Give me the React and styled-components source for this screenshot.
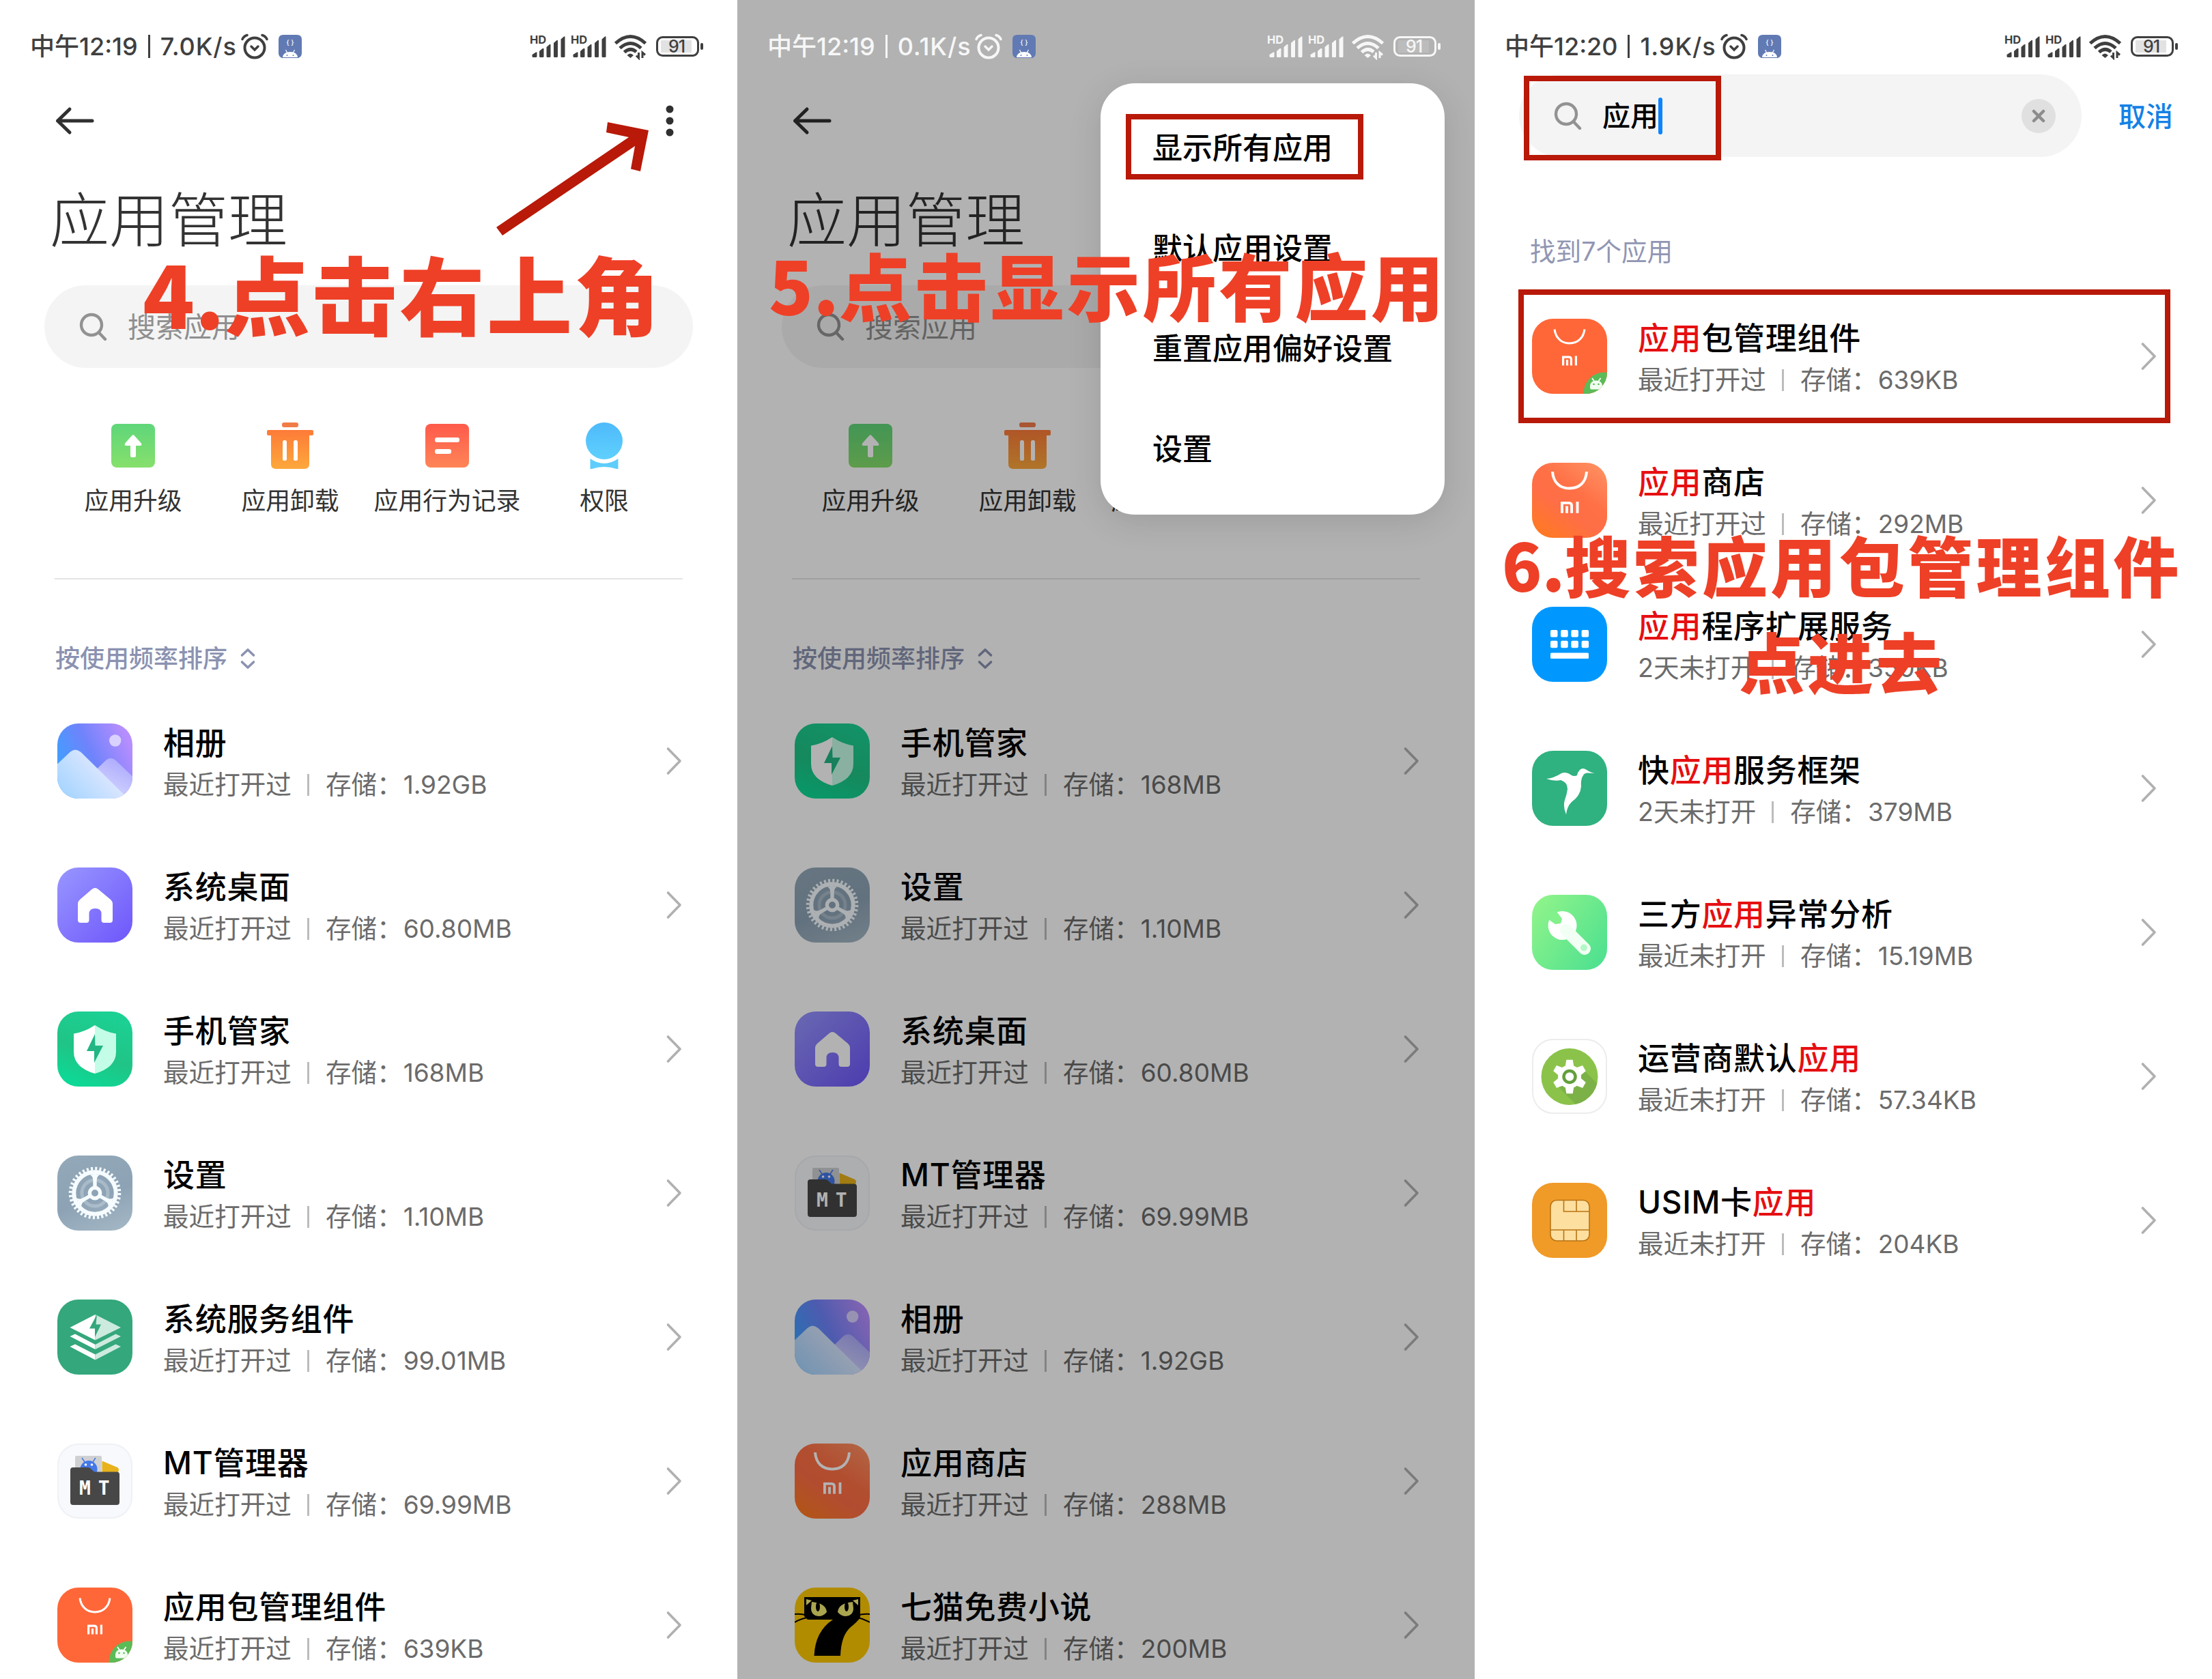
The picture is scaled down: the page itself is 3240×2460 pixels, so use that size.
import React from "react";
import styled, { createGlobalStyle } from "styled-components";

const GlobalStyle = createGlobalStyle`
  * {
    box-sizing: border-box;
  }
  body {
    margin: 0;
    background: #fff;
    font-family: Inter, "Noto Sans CJK SC", sans-serif;
  }
`;

const Page = styled.main`
  display: flex;
  width: 3240px;
  height: 2460px;
  overflow: hidden;
`;

const Panel = styled.section`
  position: relative;
  display: flex;
  flex-direction: column;
  width: 1080px;
  height: 2460px;
  overflow: hidden;
  background: #fff;
  color: #333;
`;

const StatusRow = styled.div`
  position: relative;
  z-index: 2;
  display: flex;
  flex: none;
  align-items: flex-start;
  justify-content: space-between;
  height: 109px;
  padding: 48px 48px 0 44px;
  color: ${(p) => (p.$light ? "#f7f7f7" : "#3f3f3f")};
`;

const StatusLeft = styled.div`
  display: flex;
  align-items: center;
  height: 40px;
  font-size: 36px;
  font-weight: 500;
  line-height: 40px;
  white-space: nowrap;
`;

const Speed = styled.span`
  letter-spacing: 0.9px;
`;

const StatusBarLine = styled.i`
  width: 3px;
  height: 34px;
  margin: 0 15px 0 15px;
  background: currentColor;
`;

const AlarmSvg = styled.svg`
  width: 44px;
  height: 40px;
  margin-left: 4px;
`;

const DevSvg = styled.svg`
  width: 34px;
  height: 34px;
  margin-left: 13px;
`;

const SignalSvg = styled.svg`
  width: 258px;
  height: 40px;
`;

const Header = styled.header`
  display: flex;
  flex: none;
  align-items: center;
  justify-content: space-between;
  height: 136px;
  padding: 0 92px 0 78px;
`;

const Heading = styled.h1`
  flex: none;
  height: 110px;
  margin: 24px 0 39px 73px;
  font-size: 87px;
  font-weight: 300;
  line-height: 110px;
`;

const SearchBox = styled.div`
  display: flex;
  flex: none;
  align-items: center;
  width: ${(p) => p.$width}px;
  height: 121px;
  margin-left: 65px;
  padding: 0 38px 0 51px;
  border-radius: 61px;
  background: #f4f4f4;
  color: ${(p) => (p.$filled ? "#000" : "#8f8f8f")};
  font-size: 41px;
  font-weight: ${(p) => (p.$filled ? 500 : 400)};
  line-height: 60px;
`;

const SearchLabel = styled.span`
  margin-left: 29px;
`;

const Caret = styled.i`
  width: 6px;
  height: 54px;
  border-radius: 3px;
  background: #0d84ff;
`;

const ClearButton = styled.span`
  display: flex;
  align-items: center;
  justify-content: center;
  width: 50px;
  height: 50px;
  margin-left: auto;
  border-radius: 50%;
  background: #e0e0e0;
`;

const SearchBar = styled.div`
  display: flex;
  flex: none;
  align-items: center;
`;

const Cancel = styled.span`
  margin: 2px 0 0 54px;
  color: #1481e6;
  font-size: 40px;
  font-weight: 500;
  line-height: 60px;
`;

const Actions = styled.div`
  display: grid;
  flex: none;
  grid-template-columns: repeat(4, 230px);
  margin: 80px 0 0 80px;
`;

const Action = styled.div`
  display: flex;
  flex-direction: column;
  gap: 27px;
  align-items: center;
  font-size: 35.8px;
  line-height: 40px;
  white-space: nowrap;

  svg {
    width: 68px;
    height: 68px;
  }
`;

const Divider = styled.hr`
  flex: none;
  width: 920px;
  height: 2px;
  margin: 93px 0 0 80px;
  border: 0;
  background: #e4e4e4;
`;

const SortRow = styled.div`
  display: flex;
  flex: none;
  gap: 18px;
  align-items: center;
  margin: 91px 0 0 81px;
  color: #8b92b1;
  font-size: 36px;
  font-weight: 500;
  line-height: 50px;
`;

const Count = styled.div`
  flex: none;
  margin: 114px 0 22px 81px;
  color: #9196b3;
  font-size: 37.6px;
  line-height: 50px;
`;

const List = styled.ul`
  display: flex;
  flex: none;
  flex-direction: column;
  margin: ${(p) => p.$top}px 0 0;
  padding: 0;
  list-style: none;
`;

const Row = styled.li`
  display: flex;
  align-items: center;
  height: 211px;
  padding: 0 80px 0 84px;
`;

const IconTile = styled.svg`
  flex: none;
  width: 110px;
  height: 110px;
  border-radius: 31px;
  background: ${(p) => p.$bg};
  box-shadow: ${(p) => (p.$outline ? `inset 0 0 0 2px ${p.$outline}` : "none")};
  overflow: hidden;
`;

const RowText = styled.div`
  flex: 1;
  margin: 9px 0 0 45px;
`;

const AppName = styled.div`
  margin-bottom: 2px;
  color: #000;
  font-size: 46px;
  font-weight: 500;
  line-height: 60px;
  letter-spacing: 0.7px;
`;

const Match = styled.span`
  color: #e60f12;
`;

const AppInfo = styled.div`
  display: flex;
  align-items: center;
  color: #6b6b6b;
  font-size: 37.6px;
  line-height: 60px;
`;

const InfoLine = styled.i`
  width: 3px;
  height: 32px;
  margin: 0 24px 0 23px;
  background: #bcbcbc;
`;

const Size = styled.span`
  margin-left: 1px;
  font-size: 37px;
`;

const Overlay = styled.div`
  position: absolute;
  inset: 0;
  z-index: 1;
  background: rgba(0, 0, 0, 0.3);
`;

const Menu = styled.div`
  position: absolute;
  z-index: 3;
  top: 122px;
  left: 532px;
  display: flex;
  flex-direction: column;
  width: 504px;
  padding: 22px 0;
  border-radius: 50px;
  background: #fff;
  box-shadow: 0 10px 50px rgba(0, 0, 0, 0.12);
`;

const MenuItem = styled.div`
  height: 147px;
  padding-left: 76px;
  color: #000;
  font-size: 44px;
  font-weight: 500;
  line-height: 147px;
`;

const RedFrame = styled.div`
  position: absolute;
  z-index: 4;
  top: ${(p) => p.$top}px;
  left: ${(p) => p.$left}px;
  width: ${(p) => p.$width}px;
  height: ${(p) => p.$height}px;
  border: 8px solid #b81908;
`;

const ArrowSvg = styled.svg`
  position: absolute;
  z-index: 4;
  top: 170px;
  left: 720px;
  width: 240px;
  height: 185px;
`;

const Caption = styled.div`
  position: absolute;
  z-index: 5;
  top: ${(p) => p.$top}px;
  left: ${(p) => p.$left}px;
  color: #ee4027;
  font-family: "Noto Sans CJK SC", sans-serif;
  font-size: ${(p) => p.$size}px;
  font-weight: 800;
  line-height: 141px;
  letter-spacing: ${(p) => p.$spacing}px;
  text-align: center;
  white-space: nowrap;
`;

const StepNumber = styled.span`
  letter-spacing: 0;
`;

const BagMark = ({ wide }) => (
  <g fill="none" stroke="#fff">
    {wide ? (
      <path d="M30 13C31 29 41 37.500 55 37.500S79 29 80 13" strokeWidth="4" />
    ) : (
      <path d="M33 15.500C34.500 28 43 36 55 36S75.500 28 77 15.500" strokeWidth="3" />
    )}
    <g
      transform={wide ? "translate(42 57) scale(1.2)" : "translate(44 54.500)"}
      strokeWidth="3.200"
    >
      <path d="M1.600 14V1.600H10Q13.400 1.600 13.400 5V14M7.500 5.500V14M20.400 0V14" />
    </g>
  </g>
);

const GalleryIcon = () => (
  <IconTile
    viewBox="0 0 110 110"
    $bg="linear-gradient(65deg, #3f9fff 15%, #6f83fb 50%, #b88eff 90%)"
  >
    <defs>
      <linearGradient id="hillFront" x1="0" y1="1" x2="0.9" y2="0.4">
        <stop offset="0" stopColor="#9ed2ff" />
        <stop offset="1" stopColor="#e6eaff" />
      </linearGradient>
      <linearGradient id="hillBack" x1="0.9" y1="0" x2="0.3" y2="1">
        <stop offset="0" stopColor="#a9a5fd" />
        <stop offset="1" stopColor="#d9deff" />
      </linearGradient>
    </defs>
    <circle cx="84.700" cy="25" r="8.700" fill="#d9d2ff" />
    <path
      d="M40 84L70 55Q78 47.500 86 54.500L110 77.500V110H60Z"
      fill="url(#hillBack)"
    />
    <path
      d="M0 59.500L18.500 42Q26 35 34.500 42L98 104.500V110H0Z"
      fill="url(#hillFront)"
    />
  </IconTile>
);

const HomeIcon = () => (
  <IconTile
    viewBox="0 0 110 110"
    $bg="linear-gradient(135deg, #9490ff 10%, #7059fb 95%)"
  >
    <path
      d="M50.500 32Q55.300 28 60 32L78 47Q81 49.700 81 53V77Q81 81 77 81H68.500Q64.500 81 64.500 77V68Q64.500 60 55.500 60T46.500 68V77Q46.500 81 42.500 81H34Q30 81 30 77V53Q30 49.700 33 47Z"
      fill="#fff"
    />
  </IconTile>
);

const GuardIcon = () => (
  <IconTile
    viewBox="0 0 110 110"
    $bg="linear-gradient(20deg, #08de9a 0%, #20c486 45%, #1bd397 100%)"
  >
    <path d="M55 20Q40 30 24 32.500V59Q24 82 55 91Z" fill="#fff" />
    <path d="M55 20Q70 30 86 32.500V59Q86 82 55 91Z" fill="#c4fde7" />
    <path d="M55 33L43 58H54V75L67 50H55.500Z" fill="#21b684" />
  </IconTile>
);

const SettingsIcon = () => (
  <IconTile
    viewBox="0 0 110 110"
    $bg="linear-gradient(160deg, #93a9b9 0%, #8da3b5 55%, #a5b8c6 100%)"
  >
    <g fill="none" stroke="#f6fcff">
      <circle cx="55" cy="55" r="19" strokeWidth="5" opacity="0.250" />
      <circle
        cx="55"
        cy="55"
        r="35.800"
        strokeWidth="5"
        strokeDasharray="3 3.248"
      />
      <circle cx="55" cy="55" r="30.700" strokeWidth="6" />
      <circle cx="55" cy="55" r="7.700" strokeWidth="5.400" />
      <path
        d="M55 46V26M47.500 59.500L30 69.500M62.500 59.500L80 69.500"
        strokeWidth="5.400"
      />
    </g>
    <g fill="#f6fcff">
      <path d="M46 27.500Q52 29 52.300 36H57.700Q58 29 64 27.500Z" />
      <path
        d="M46 27.500Q52 29 52.300 36H57.700Q58 29 64 27.500Z"
        transform="rotate(120 55 55)"
      />
      <path
        d="M46 27.500Q52 29 52.300 36H57.700Q58 29 64 27.500Z"
        transform="rotate(240 55 55)"
      />
    </g>
  </IconTile>
);

const ServiceIcon = () => (
  <IconTile viewBox="0 0 110 110" $bg="#34a77c">
    <path d="M55.500 22L18.500 41L55.500 59.500Z" fill="#fff" />
    <path d="M55.500 22L93 41L55.500 59.500Z" fill="#cdeadf" />
    <path d="M58 22L47 42.500H55V55L64 36.500H56.500Z" fill="#34a77c" />
    <path d="M18.500 54L26 50.500L55.500 66V73Z" fill="#fff" />
    <path d="M93 54L85.500 50.500L55.500 66V73Z" fill="#cdeadf" />
    <path d="M18.500 69L26 65.500L55.500 80.500V88.500Z" fill="#fff" />
    <path d="M93 69L85.500 65.500L55.500 80.500V88.500Z" fill="#cdeadf" />
  </IconTile>
);

const MtIcon = () => (
  <IconTile viewBox="0 0 110 110" $bg="#f7f9fd" $outline="#eff1f5">
    <rect x="26" y="18" width="39" height="30" rx="2" fill="#cfd0d2" />
    <path d="M36 21L40 27M56 21L52 27" stroke="#4478e8" strokeWidth="1.500" />
    <circle cx="46" cy="37.500" r="12.500" fill="#4478e8" />
    <circle cx="41.500" cy="31" r="1.800" fill="#fff" />
    <circle cx="50.500" cy="31" r="1.800" fill="#fff" />
    <path d="M65.500 25.500L88 35Q90.500 36.500 90 39L88 45H65.500Z" fill="#e8b21c" />
    <path
      d="M19 39Q19 35 23 35H45Q48 35 50 38L54 41.600H87Q91 41.600 91 45.600V86Q91 90 87 90H23Q19 90 19 86Z"
      fill="#474747"
    />
    <text
      x="32"
      y="75"
      fill="#fff"
      fontFamily="DejaVu Sans Mono, monospace"
      fontSize="28"
      fontWeight="700"
      letterSpacing="11"
    >
      MT
    </text>
  </IconTile>
);

const InstallerIcon = () => (
  <IconTile viewBox="0 0 110 110" $bg="#ff6738">
    <BagMark />
    <circle cx="106" cy="109" r="30.500" fill="#5bbb57" />
    <path d="M88 87L91 91.500M100.500 87L97.500 91.500" stroke="#fff" strokeWidth="1.800" />
    <path
      d="M85 98Q86 90.500 94 90.500T103 98V101Q103 103.500 101 103.500H87Q85 103.500 85 101Z"
      fill="#f1fff0"
    />
    <circle cx="90.500" cy="96" r="1.300" fill="#5bbb57" />
    <circle cx="97.500" cy="96" r="1.300" fill="#5bbb57" />
  </IconTile>
);

const StoreIcon = () => (
  <IconTile
    viewBox="0 0 110 110"
    $bg="linear-gradient(35deg, #ff7c1c 0%, #ff6e46 40%, #ff7046 60%, #ff9566 100%)"
  >
    <BagMark wide />
  </IconTile>
);

const CatIcon = () => (
  <IconTile viewBox="0 0 110 110" $bg="#fec900">
    <path
      d="M14 14H96V44Q92 50 82 58Q68 70 67 100H28.500Q30 64 56 47H19L14 42Z"
      fill="#000"
    />
    <path d="M17 17L25 19L17 26ZM93 17L85 19L93 26Z" fill="#f8f07a" />
    <path
      d="M0 39Q10 38 18 41M0 51Q8 46 18 44M110 39Q100 38 92 41M110 51Q102 46 92 44"
      fill="none"
      stroke="#000"
      strokeWidth="2"
    />
    <path d="M25 21Q46 23 47 36Q42 42 35 42Q24 41 24 30Z" fill="#f4ec72" />
    <path d="M85 21Q64 23 63 36Q68 42 75 42Q86 41 86 30Z" fill="#f4ec72" />
    <ellipse cx="34" cy="28" rx="3" ry="7" fill="#000" />
    <ellipse cx="76" cy="28" rx="3" ry="7" fill="#000" />
  </IconTile>
);

const KeyboardIcon = () => (
  <IconTile viewBox="0 0 110 110" $bg="#0098fe">
    {[34, 49.8].map((y) =>
      [27, 42.2, 57.4, 72.6].map((x) => (
        <rect
          key={`${x}-${y}`}
          x={x}
          y={y}
          width="10.500"
          height="10.500"
          rx="2"
          fill="#fff"
        />
      ))
    )}
    <rect x="27" y="67.500" width="56" height="8.500" rx="1.500" fill="#fff" />
  </IconTile>
);

const BirdIcon = () => (
  <IconTile viewBox="0 0 110 110" $bg="#2fb180">
    <path
      d="M91.500 33Q84 31 80 28Q74 24 70 28Q67 31 66 36Q62 38 58 36Q50 30 43 33Q32 40 21 41Q32 45 42 43Q52 46 52 56Q51 64 48 72Q45 82 50 93.500Q51 82 58 75Q71 66 72 52Q71 42 75 36Q77 32 82 32.500Z"
      fill="#fff"
    />
  </IconTile>
);

const WrenchIcon = () => (
  <IconTile
    viewBox="0 0 110 110"
    $bg="linear-gradient(125deg, #90f48a 5%, #4de090 95%)"
  >
    <circle cx="44.500" cy="45" r="21" fill="#fff" />
    <path
      d="M50 52L77 79"
      stroke="#f2fff4"
      strokeWidth="18"
      strokeLinecap="round"
    />
    <path d="M22 27L34 22L44 35L42 42L34 43L24 36Z" fill="#82f08b" />
    <circle cx="76" cy="77.500" r="5" fill="#b5f7c8" />
  </IconTile>
);

const CarrierIcon = () => (
  <IconTile viewBox="0 0 110 110" $bg="#fff" $outline="#ececec">
    <clipPath id="carrierDisc">
      <circle cx="55" cy="55.500" r="41.500" />
    </clipPath>
    <circle cx="55" cy="55.500" r="41.500" fill="#8bc34a" />
    <path
      d="M39 71L75 45L110 80V110H78Z"
      fill="#7cb148"
      clipPath="url(#carrierDisc)"
    />
    <circle cx="55" cy="55.500" r="17" fill="#fff" />
    {[0, 60, 120, 180, 240, 300].map((deg) => (
      <path
        key={deg}
        d="M51 31.500H59L60.500 40H49.500Z"
        fill="#fff"
        stroke="#fff"
        strokeWidth="1.500"
        transform={`rotate(${deg} 55 55.500)`}
      />
    ))}
    <circle
      cx="55"
      cy="55.500"
      r="8.500"
      fill="#fff"
      stroke="#639f3c"
      strokeWidth="4.500"
    />
  </IconTile>
);

const SimIcon = () => (
  <IconTile viewBox="0 0 110 110" $bg="#f09a28">
    <rect
      x="27"
      y="25.500"
      width="57"
      height="59.500"
      rx="9"
      fill="#fddf9f"
      stroke="#b87414"
      strokeWidth="1.600"
    />
    <path
      d="M46.500 25.500V42H84M65 25.500V42M27 69H84M46.500 69V85M65 69V85"
      fill="none"
      stroke="#b87414"
      strokeWidth="1.600"
    />
  </IconTile>
);

const UpgradeIcon = () => (
  <svg viewBox="0 0 68 68">
    <defs>
      <linearGradient id="up" x1="0" y1="0" x2="0" y2="1">
        <stop offset="0" stopColor="#5fd67a" />
        <stop offset="1" stopColor="#86e06b" />
      </linearGradient>
    </defs>
    <rect x="2" y="2" width="64" height="64" rx="8" fill="url(#up)" />
    <path
      d="M32 19.500Q34 17 36 19.500L45.500 30Q48 34 44 34H38V49Q38 51 36 51H32Q30 51 30 49V34H24Q20 34 22.500 30Z"
      fill="#fff"
    />
  </svg>
);

const TrashIcon = () => (
  <svg viewBox="0 0 68 68">
    <defs>
      <linearGradient id="bin" x1="0" y1="0" x2="0" y2="1">
        <stop offset="0" stopColor="#fd7b38" />
        <stop offset="1" stopColor="#fda83c" />
      </linearGradient>
    </defs>
    <rect x="22" y="0" width="24" height="7" rx="3" fill="#f27c48" />
    <path
      d="M2 11H66Q68 11 68 13V17Q68 19 66 19H62V61Q62 68 55 68H13Q6 68 6 61V19H2Q0 19 0 17V13Q0 11 2 11Z"
      fill="url(#bin)"
    />
    <rect x="23" y="26" width="6" height="30" rx="2.500" fill="#fff" />
    <rect x="39" y="26" width="6" height="30" rx="2.500" fill="#fff" />
  </svg>
);

const RecordIcon = () => (
  <svg viewBox="0 0 68 68">
    <defs>
      <linearGradient id="rec" x1="0" y1="0" x2="0" y2="1">
        <stop offset="0" stopColor="#fe5a4b" />
        <stop offset="1" stopColor="#fe8557" />
      </linearGradient>
    </defs>
    <rect x="2" y="2" width="64" height="64" rx="8" fill="url(#rec)" />
    <rect x="16" y="22" width="36" height="7" rx="3" fill="#fff" />
    <rect x="16" y="39" width="24" height="7" rx="3" fill="#fff" />
  </svg>
);

const PermissionIcon = () => (
  <svg viewBox="0 0 68 68">
    <defs>
      <linearGradient id="perm" x1="0" y1="0" x2="0" y2="1">
        <stop offset="0" stopColor="#4ebafb" />
        <stop offset="1" stopColor="#5fd0fd" />
      </linearGradient>
    </defs>
    <circle cx="34" cy="27" r="27" fill="url(#perm)" />
    <path
      d="M13.500 53Q34 67 54.500 53V67Q54.500 69 52 68Q34 62 16 68Q13.500 69 13.500 67Z"
      fill="#5fcdfb"
    />
  </svg>
);

const SearchIcon = () => (
  <svg width="42" height="42" viewBox="0 0 42 42">
    <g fill="none" stroke="#929292" strokeWidth="4.400" strokeLinecap="round">
      <circle cx="18" cy="18" r="15" />
      <path d="M29 29.500L38 39" />
    </g>
  </svg>
);

const BackIcon = () => (
  <svg width="62" height="44" viewBox="0 0 62 44">
    <path
      d="M24 5L6.500 22L24 39M6.500 22H57"
      fill="none"
      stroke="#303030"
      strokeWidth="5"
      strokeLinecap="round"
      strokeLinejoin="round"
    />
  </svg>
);

const MoreIcon = () => (
  <svg width="14" height="48" viewBox="0 0 14 48">
    <g fill="#303030">
      <circle cx="7" cy="7" r="5.500" />
      <circle cx="7" cy="24" r="5.500" />
      <circle cx="7" cy="41" r="5.500" />
    </g>
  </svg>
);

const ChevronIcon = () => (
  <svg width="26" height="44" viewBox="0 0 26 44">
    <path
      d="M4.500 4L22 22L4.500 40"
      fill="none"
      stroke="#b0b0b0"
      strokeWidth="3.600"
      strokeLinecap="round"
      strokeLinejoin="round"
    />
  </svg>
);

const SortIcon = () => (
  <svg width="24" height="34" viewBox="0 0 24 34">
    <path
      d="M3.500 12L12 4L20.500 12M3.500 22L12 30L20.500 22"
      fill="none"
      stroke="#8b92b1"
      strokeWidth="3.600"
      strokeLinecap="round"
      strokeLinejoin="round"
    />
  </svg>
);

const Bars = ({ x }) => (
  <g transform={`translate(${x} 0)`} fill="currentColor">
    <text
      x="-1"
      y="16"
      fontFamily="Inter, sans-serif"
      fontSize="16.500"
      fontWeight="700"
    >
      HD
    </text>
    <path d="M2.500 36V32L8 28.500H9.500V34.500Q9.500 36 8 36H4Q2.500 36 2.500 34.500Z" />
    <path d="M13 27L17.500 23H19.500V34.500Q19.500 36 18 36H14.500Q13 36 13 34.500Z" />
    <path d="M23.500 21L28 17H29.500V34.500Q29.500 36 28 36H25Q23.500 36 23.500 34.500Z" />
    <path d="M34 15L38.500 11H40V34.500Q40 36 38.500 36H35.500Q34 36 34 34.500Z" />
    <path d="M44.500 9.500L49 5.500H50.500V34.500Q50.500 36 49 36H46Q44.500 36 44.500 34.500Z" />
  </g>
);

const SignalIcons = () => (
  <SignalSvg viewBox="0 0 258 40">
    <Bars x={3} />
    <Bars x={63} />
    <g fill="none" stroke="currentColor" strokeWidth="5">
      <path d="M127.500 15.500Q149.500 -4.500 171.500 15.500" />
      <path d="M134 22.500Q149.500 8.500 165 22.500" />
      <path d="M140.500 28.500Q149.500 20.500 158 28" />
    </g>
    <path d="M144.500 33Q149 28 154 33L149.500 37Z" fill="currentColor" />
    <path
      d="M161.500 29V37L158 33.500M167 37V29L171 32.500"
      fill="none"
      stroke="currentColor"
      strokeWidth="3"
    />
    <rect
      x="188.500"
      y="6.500"
      width="60"
      height="27"
      rx="8"
      fill="none"
      stroke="currentColor"
      strokeWidth="3"
    />
    <rect x="194" y="11" width="45" height="18" fill="currentColor" opacity="0.150" />
    <rect x="252" y="15" width="4" height="10" rx="2" fill="currentColor" />
    <text
      x="217"
      y="29"
      fill="currentColor"
      fontFamily="Inter, sans-serif"
      fontSize="25"
      fontWeight="500"
      textAnchor="middle"
      letterSpacing="-1"
    >
      91
    </text>
  </SignalSvg>
);

const StatusBar = ({ time, speed, light }) => (
  <StatusRow $light={light}>
    <StatusLeft>
      {time}
      <StatusBarLine />
      <Speed>{speed}</Speed>
      <AlarmSvg viewBox="0 0 44 40">
        <g fill="none" stroke="currentColor" strokeLinecap="round">
          <circle cx="22" cy="22" r="14.500" strokeWidth="4" />
          <path d="M17 20L22 25L27 20" strokeWidth="3.500" />
          <path d="M4 9.500Q6 5 11 3.500M40 9.500Q38 5 33 3.500" strokeWidth="3.500" />
        </g>
      </AlarmSvg>
      <DevSvg viewBox="0 0 34 34">
        <path
          d="M7 0H27Q34 0 34 7V27Q34 32 29 34H5Q0 32 0 27V7Q0 0 7 0Z"
          fill="#617ab4"
        />
        <text
          x="17"
          y="15"
          fill="#fff"
          fontFamily="Inter, sans-serif"
          fontSize="10"
          textAnchor="middle"
        >
          {"{ }"}
        </text>
        <path d="M6 33Q7 25 17 25T28 33Z" fill="#fff" />
        <path d="M10.500 22L13 27M23.500 22L21 27" stroke="#fff" strokeWidth="1.200" />
        <circle cx="12.500" cy="30" r="1" fill="#617ab4" />
        <circle cx="21.500" cy="30" r="1" fill="#617ab4" />
      </DevSvg>
    </StatusLeft>
    <SignalIcons />
  </StatusRow>
);

const apps = {
  gallery: { name: "相册", size: "1.92GB", Icon: GalleryIcon },
  home: { name: "系统桌面", size: "60.80MB", Icon: HomeIcon },
  guard: { name: "手机管家", size: "168MB", Icon: GuardIcon },
  settings: { name: "设置", size: "1.10MB", Icon: SettingsIcon },
  service: { name: "系统服务组件", size: "99.01MB", Icon: ServiceIcon },
  mt: { name: "MT管理器", size: "69.99MB", Icon: MtIcon },
  installer: { name: "应用包管理组件", size: "639KB", Icon: InstallerIcon },
  store: { name: "应用商店", size: "288MB", Icon: StoreIcon },
  cat: { name: "七猫免费小说", size: "200MB", Icon: CatIcon },
};

const byUsage = ["gallery", "home", "guard", "settings", "service", "mt", "installer"];
const byUsageAll = ["guard", "settings", "home", "mt", "gallery", "store", "cat"];

const results = [
  { name: "应用包管理组件", size: "639KB", Icon: InstallerIcon },
  { name: "应用商店", size: "292MB", Icon: StoreIcon },
  { name: "应用程序扩展服务", size: "350KB", used: "2天未打开", Icon: KeyboardIcon },
  { name: "快应用服务框架", size: "379MB", used: "2天未打开", Icon: BirdIcon },
  { name: "三方应用异常分析", size: "15.19MB", used: "最近未打开", Icon: WrenchIcon },
  { name: "运营商默认应用", size: "57.34KB", used: "最近未打开", Icon: CarrierIcon },
  { name: "USIM卡应用", size: "204KB", used: "最近未打开", Icon: SimIcon },
];

const menuItems = ["显示所有应用", "默认应用设置", "重置应用偏好设置", "设置"];

function highlight(name, query) {
  if (!query) return name;
  const [before, after] = name.split(query);
  return (
    <>
      {before}
      <Match>{query}</Match>
      {after}
    </>
  );
}

function AppRow({ name, size, used = "最近打开过", Icon, query }) {
  return (
    <Row>
      <Icon />
      <RowText>
        <AppName>{highlight(name, query)}</AppName>
        <AppInfo>
          {used}
          <InfoLine />
          存储：
          <Size>{size}</Size>
        </AppInfo>
      </RowText>
      <ChevronIcon />
    </Row>
  );
}

function Manager({ keys, showMore }) {
  return (
    <>
      <Header>
        <BackIcon />
        {showMore && <MoreIcon />}
      </Header>
      <Heading>应用管理</Heading>
      <SearchBox $width={950}>
        <SearchIcon />
        <SearchLabel>搜索应用</SearchLabel>
      </SearchBox>
      <Actions>
        <Action>
          <UpgradeIcon />
          应用升级
        </Action>
        <Action>
          <TrashIcon />
          应用卸载
        </Action>
        <Action>
          <RecordIcon />
          应用行为记录
        </Action>
        <Action>
          <PermissionIcon />
          权限
        </Action>
      </Actions>
      <Divider />
      <SortRow>
        按使用频率排序
        <SortIcon />
      </SortRow>
      <List $top={19}>
        {keys.map((key) => (
          <AppRow key={key} {...apps[key]} />
        ))}
      </List>
    </>
  );
}

function App() {
  return (
    <Page>
      <GlobalStyle />
      <Panel>
        <StatusBar time="中午12:19" speed="7.0K/s" />
        <Manager keys={byUsage} showMore />
        <ArrowSvg viewBox="720 170 240 185">
          <path
            d="M727 333L921 201L888 194L890 179L950 191L938 251L924 247.500L930 214L736 345Z"
            fill="#b81908"
          />
        </ArrowSvg>
        <Caption $top={357} $left={209} $size={125} $spacing={3}>
          <StepNumber>4.</StepNumber>点击右上角
        </Caption>
      </Panel>

      <Panel>
        <StatusBar time="中午12:19" speed="0.1K/s" light />
        <Manager keys={byUsageAll} />
        <Overlay />
        <Menu>
          {menuItems.map((item) => (
            <MenuItem key={item}>{item}</MenuItem>
          ))}
        </Menu>
        <RedFrame $top={167} $left={569} $width={348} $height={96} />
        <Caption $top={345} $left={46} $size={107} $spacing={4.3}>
          <StepNumber>5.</StepNumber>点击显示所有应用
        </Caption>
      </Panel>

      <Panel>
        <StatusBar time="中午12:20" speed="1.9K/s" />
        <SearchBar>
          <SearchBox $width={824} $filled>
            <SearchIcon />
            <SearchLabel>应用</SearchLabel>
            <Caret />
            <ClearButton>
              <svg width="20" height="20" viewBox="0 0 20 20">
                <path
                  d="M3 3L17 17M17 3L3 17"
                  stroke="#8c8c8c"
                  strokeWidth="4.500"
                  strokeLinecap="round"
                />
              </svg>
            </ClearButton>
          </SearchBox>
          <Cancel>取消</Cancel>
        </SearchBar>
        <Count>找到7个应用</Count>
        <List $top={0}>
          {results.map((app) => (
            <AppRow key={app.name} {...app} query="应用" />
          ))}
        </List>
        <RedFrame $top={111} $left={72} $width={289} $height={124} />
        <RedFrame $top={424} $left={64} $width={955} $height={196} />
        <Caption $top={755} $left={40} $size={96} $spacing={4.4}>
          <StepNumber>6.</StepNumber>搜索应用包管理组件
          <br />
          点进去
        </Caption>
      </Panel>
    </Page>
  );
}

export default App;
